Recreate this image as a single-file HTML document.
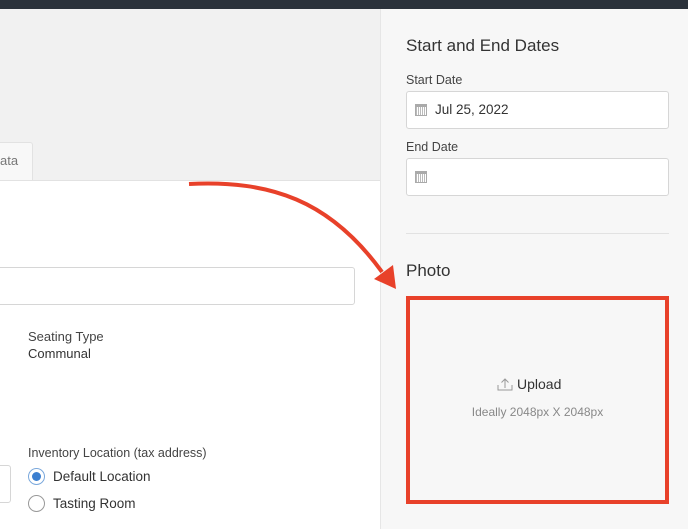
<!DOCTYPE html>
<html><head><style>
*{box-sizing:border-box;margin:0;padding:0}
body{width:688px;height:529px;overflow:hidden;position:relative;font-family:"Liberation Sans",sans-serif;background:#fff;color:#333}
.abs{position:absolute}
.input{position:absolute;background:#fff;border:1px solid #d6d6d6;border-radius:3px}
</style></head><body>
<div class="abs" style="left:0;top:0;width:688px;height:9px;background:#2b323b"></div>
<div class="abs" style="left:0;top:9px;width:380px;height:171px;background:#f1f1f1"></div>
<div class="abs" style="left:0;top:142px;width:33px;height:39px;background:#f8f8f8;border:1px solid #e2e2e2;border-left:none;border-bottom:none;border-radius:0 3px 0 0"></div>
<div class="abs" style="left:0;top:153px;font-size:13px;color:#777">ata</div>
<div class="abs" style="left:0;top:180px;width:380px;height:1px;background:#e2e2e2"></div>
<div class="input" style="left:-5px;top:267px;width:360px;height:38px"></div>
<div class="abs" style="left:28px;top:329px;font-size:13px;color:#444">Seating Type</div>
<div class="abs" style="left:28px;top:346px;font-size:13px;color:#333">Communal</div>
<div class="abs" style="left:28px;top:446px;font-size:12.5px;color:#444">Inventory Location (tax address)</div>
<div class="input" style="left:-5px;top:465px;width:16px;height:38px"></div>
<div class="abs" style="left:28px;top:468px;width:17px;height:17px;border-radius:50%;border:1px solid #7aa8dc;background:#fff"></div>
<div class="abs" style="left:32px;top:472px;width:9px;height:9px;border-radius:50%;background:#3b7fd0"></div>
<div class="abs" style="left:53px;top:469px;font-size:13.5px;color:#333">Default Location</div>
<div class="abs" style="left:28px;top:495px;width:17px;height:17px;border-radius:50%;border:1px solid #999;background:#fff"></div>
<div class="abs" style="left:53px;top:496px;font-size:13.5px;color:#333">Tasting Room</div>

<div class="abs" style="left:380px;top:9px;width:308px;height:520px;background:#f7f7f7;border-left:1px solid #e6e6e6"></div>
<div class="abs" style="left:406px;top:36px;font-size:17px;color:#333">Start and End Dates</div>
<div class="abs" style="left:406px;top:73px;font-size:12.5px;color:#444">Start Date</div>
<div class="input" style="left:406px;top:91px;width:263px;height:38px"></div>
<div class="abs" style="left:415px;top:104px;width:12px;height:12px;border:1px solid #aaa;border-top:3px solid #aaa;background:repeating-linear-gradient(90deg,#bbb 0 1px,#fff 1px 2px)"></div>
<div class="abs" style="left:435px;top:102px;font-size:13.5px;color:#333">Jul 25, 2022</div>
<div class="abs" style="left:406px;top:140px;font-size:12.5px;color:#444">End Date</div>
<div class="input" style="left:406px;top:158px;width:263px;height:38px"></div>
<div class="abs" style="left:415px;top:171px;width:12px;height:12px;border:1px solid #aaa;border-top:3px solid #aaa;background:repeating-linear-gradient(90deg,#bbb 0 1px,#fff 1px 2px)"></div>
<div class="abs" style="left:406px;top:233px;width:263px;height:1px;background:#e2e2e2"></div>
<div class="abs" style="left:406px;top:261px;font-size:17px;color:#333">Photo</div>
<div class="abs" style="left:406px;top:296px;width:263px;height:208px;border:4px solid #e8412a"></div>
<svg class="abs" style="left:497px;top:377px" width="16" height="14" viewBox="0 0 16 14"><path d="M1 8v5h14V8M8 11V2M4.5 5.5L8 2l3.5 3.5" fill="none" stroke="#999" stroke-width="1"/></svg>
<div class="abs" style="left:517px;top:376px;font-size:14px;color:#333">Upload</div>
<div class="abs" style="left:406px;top:405px;width:263px;text-align:center;font-size:12px;color:#888">Ideally 2048px X 2048px</div>
<svg class="abs" style="left:0;top:0" width="688" height="529"><path d="M189 184 C270 180 330 200 382 272" fill="none" stroke="#e8412a" stroke-width="4"/><path d="M396 289 L374 279 L393 265 Z" fill="#e8412a"/></svg>
</body></html>
